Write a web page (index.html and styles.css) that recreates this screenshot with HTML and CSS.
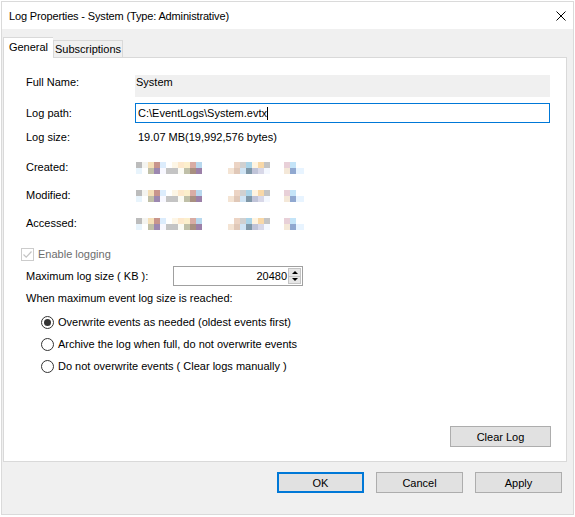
FILE: index.html
```html
<!DOCTYPE html>
<html lang="en">
<head>
  <meta charset="UTF-8">
  <title>Log Properties - System</title>
  <link rel="stylesheet" href="styles.css">
</head>
<body>

<div class="window">
  <div class="titlebar">
    <span class="title">Log Properties - System (Type: Administrative)</span>
    <span class="close">
      <svg width="10" height="10" viewBox="0 0 10 10"><path d="M0.5 0.5 L9.5 9.5 M9.5 0.5 L0.5 9.5" stroke="#000" stroke-width="1" fill="none"/></svg>
    </span>
  </div>

  <div class="body">
    <div class="tabs">
      <div class="tab active">General</div>
      <div class="tab">Subscriptions</div>
    </div>

    <div class="panel">
      <div class="row row-name">
        <span class="label">Full Name:</span>
        <span class="value readonly">System</span>
      </div>
      <div class="row row-path">
        <span class="label">Log path:</span>
        <span class="value textbox">C:\EventLogs\System.evtx<span class="caret"></span></span>
      </div>
      <div class="row row-info">
        <span class="label">Log size:</span>
        <span class="value plain">19.07 MB(19,992,576 bytes)</span>
      </div>
      <div class="row row-info row-date">
        <span class="label">Created:</span>
        <span class="value"><span class="blur"></span></span>
      </div>
      <div class="row row-info">
        <span class="label">Modified:</span>
        <span class="value"><span class="blur"></span></span>
      </div>
      <div class="row row-info">
        <span class="label">Accessed:</span>
        <span class="value"><span class="blur"></span></span>
      </div>

      <div class="check-row">
        <span class="checkbox">
          <svg width="11" height="11" viewBox="0 0 11 11"><path d="M1.5 5.5 L4.2 8.2 L9.5 2.5" stroke="#c4c4c4" stroke-width="1.2" fill="none"/></svg>
        </span>
        <span class="disabled-text">Enable logging</span>
      </div>

      <div class="size-row">
        <span class="label">Maximum log size ( KB ):</span>
        <span class="spinbox">
          <span class="spin-value">20480</span>
          <span class="spin-arrows">
            <span class="arrow up"></span>
            <span class="arrow down"></span>
          </span>
        </span>
      </div>

      <div class="when-row">When maximum event log size is reached:</div>

      <div class="radios">
        <div class="radio-row"><span class="radio checked"></span>Overwrite events as needed (oldest events first)</div>
        <div class="radio-row"><span class="radio"></span>Archive the log when full, do not overwrite events</div>
        <div class="radio-row"><span class="radio"></span>Do not overwrite events ( Clear logs manually )</div>
      </div>

      <button class="btn clear-log">Clear Log</button>
    </div>

    <div class="actions">
      <button class="btn default">OK</button>
      <button class="btn">Cancel</button>
      <button class="btn">Apply</button>
    </div>
  </div>
</div>

</body>
</html>
```

FILE: styles.css
```css
body {
  margin: 0;
  padding: 1px;
  background-color: #ffffff;
  font-family: "Liberation Sans", Arial, sans-serif;
  font-size: 11px;
  color: #000;
}

.window {
  width: 573px;
  height: 514px;
  box-sizing: border-box;
  border: 1px solid #dadada;
  display: flex;
  flex-direction: column;
  background-color: #f0f0f0;
}

.titlebar {
  height: 27px;
  background-color: #ffffff;
  display: flex;
  align-items: center;
  justify-content: space-between;
  padding: 0 7px 0 7px;
  flex-shrink: 0;
}

.title {
  font-size: 11px;
  letter-spacing: -0.15px;
  padding-top: 1px;
}

.close {
  display: flex;
  width: 10px;
  height: 10px;
  padding-top: 1px;
}

.body {
  flex: 1;
  padding: 8px 6px 0 1px;
  display: flex;
  flex-direction: column;
}

/* tabs */
.tabs {
  display: flex;
  align-items: flex-end;
  height: 20px;
}

.tab {
  height: 17px;
  box-sizing: border-box;
  border: 1px solid #d9d9d9;
  border-bottom: none;
  background-color: #f0f0f0;
  width: 70px;
  line-height: 16px;
  text-align: center;
}

.tab.active {
  height: 21px;
  width: 50px;
  background-color: #ffffff;
  margin-bottom: -1px;
  border-right: none;
  position: relative;
  z-index: 1;
  line-height: 18px;
}

/* main panel */
.panel {
  height: 405px;
  box-sizing: border-box;
  border: 1px solid #d9d9d9;
  background-color: #ffffff;
  padding: 17px 16px 14px 22px;
  display: flex;
  flex-direction: column;
}

.row {
  display: grid;
  grid-template-columns: 109px 1fr;
  align-items: center;
}

.row-name {
  height: 22px;
  align-items: start;
}

.row-name .label {
  padding-top: 1px;
}

.readonly {
  height: 22px;
  box-sizing: border-box;
  background-color: #f0f0f0;
  padding: 1px 0 0 1px;
}

.row-path {
  height: 20px;
  margin-top: 6px;
}

.textbox {
  height: 20px;
  box-sizing: border-box;
  border: 1px solid #0078d7;
  padding-left: 2px;
  display: flex;
  align-items: center;
}

.caret {
  display: inline-block;
  width: 1px;
  height: 13px;
  background-color: #000;
}

.row-info {
  height: 28px;
}

.row-date {
  margin-top: 2px;
}

.plain {
  padding-left: 3px;
}

/* blurred date values */
.blur {
  display: flex;
  width: 168px;
  height: 12px;
  margin-left: 1px;
  margin-top: 1px;
  background-image:
    linear-gradient(to right, #bcbcbc 0 6px, #f4f4f0 6px 12px, #f5e0b8 12px 18px, #c8958c 18px 24px, #dcecfc 24px 30px, #ffffff 30px 36px, #fdf6e6 36px 42px, #fde8cc 42px 48px, #fcefcc 48px 54px, #d8aca4 54px 60px, #b8d8ee 60px 66px, #ffffff 66px 92px, #ffffff 92px 98px, #ecd4c4 98px 104px, #d0d0d0 104px 110px, #aad4e8 110px 116px, #fff4e0 116px 122px, #f8d8a8 122px 128px, #c4c4c4 128px 134px, #ffffff 134px 148px, #e8d0d8 148px 154px, #c4e4f8 154px 160px, #ffffff 160px 168px),
    linear-gradient(to right, #e8f4fc 0 6px, #ffffff 6px 12px, #c0c0a8 12px 18px, #9c88b0 18px 24px, #f8f8ff 24px 30px, #c4c4c4 30px 36px, #c4c4c4 36px 42px, #fbfbf4 42px 48px, #c0c0a8 48px 54px, #a89080 54px 60px, #9c80a8 60px 66px, #ffffff 66px 92px, #f4e4d4 92px 98px, #e0c8b8 98px 104px, #d0e4f4 104px 110px, #8098a8 110px 116px, #c0c4d8 116px 122px, #d8d8e8 122px 128px, #f4f8ff 128px 134px, #ffffff 134px 148px, #f4e8d8 148px 154px, #90a8d0 154px 160px, #e8f4ff 160px 168px);
  background-size: 100% 6px, 100% 6px;
  background-position: top left, bottom left;
  background-repeat: no-repeat;
}

/* enable logging */
.check-row {
  display: flex;
  align-items: center;
  height: 20px;
  margin-top: 7px;
  margin-left: -5px;
  gap: 4px;
}

.checkbox {
  width: 13px;
  height: 13px;
  box-sizing: border-box;
  border: 1px solid #cccccc;
  display: flex;
  align-items: center;
  justify-content: center;
}

.disabled-text {
  color: #6d6d6d;
}

/* max size */
.size-row {
  display: flex;
  align-items: center;
  height: 20px;
  margin-top: 2px;
}

.size-row .label {
  width: 147px;
}

.spinbox {
  width: 130px;
  height: 20px;
  box-sizing: border-box;
  border: 1px solid #a0a0a0;
  display: flex;
  align-items: center;
}

.spin-value {
  flex: 1;
  text-align: right;
  padding-right: 1px;
}

.spin-arrows {
  width: 13px;
  height: 16px;
  display: flex;
  flex-direction: column;
  margin-right: 1px;
}

.arrow {
  flex: 1;
  background-color: #e6e6e6;
  border: 1px solid #c4c4c4;
  position: relative;
}

.arrow.down {
  border-top: none;
}

.arrow::after {
  content: '';
  position: absolute;
  left: 3px;
  top: 2px;
  border-left: 3px solid transparent;
  border-right: 3px solid transparent;
}

.arrow.up::after {
  border-bottom: 3px solid #000;
}

.arrow.down::after {
  top: 1px;
  border-top: 3px solid #000;
}

/* overwrite policy */
.when-row {
  height: 16px;
  line-height: 16px;
  margin-top: 4px;
}

.radios {
  margin-top: 5px;
  padding-left: 15px;
}

.radio-row {
  height: 22px;
  display: flex;
  align-items: center;
  gap: 4px;
}

.radio {
  width: 13px;
  height: 13px;
  box-sizing: border-box;
  border: 1px solid #333333;
  border-radius: 50%;
  position: relative;
}

.radio.checked::after {
  content: '';
  position: absolute;
  left: 2px;
  top: 2px;
  width: 7px;
  height: 7px;
  border-radius: 50%;
  background-color: #333333;
}

/* buttons */
.btn {
  font-family: "Liberation Sans", Arial, sans-serif;
  font-size: 11px;
  color: #000;
  background-color: #e1e1e1;
  border: 1px solid #adadad;
  height: 21px;
  width: 87px;
  padding: 0;
}

.btn.default {
  border: 2px solid #0078d7;
}

.clear-log {
  margin-top: auto;
  align-self: flex-end;
  width: 101px;
  margin-right: -1px;
}

.actions {
  display: flex;
  justify-content: flex-end;
  gap: 12px;
  margin-top: 10px;
  padding-right: 5px;
}
```
